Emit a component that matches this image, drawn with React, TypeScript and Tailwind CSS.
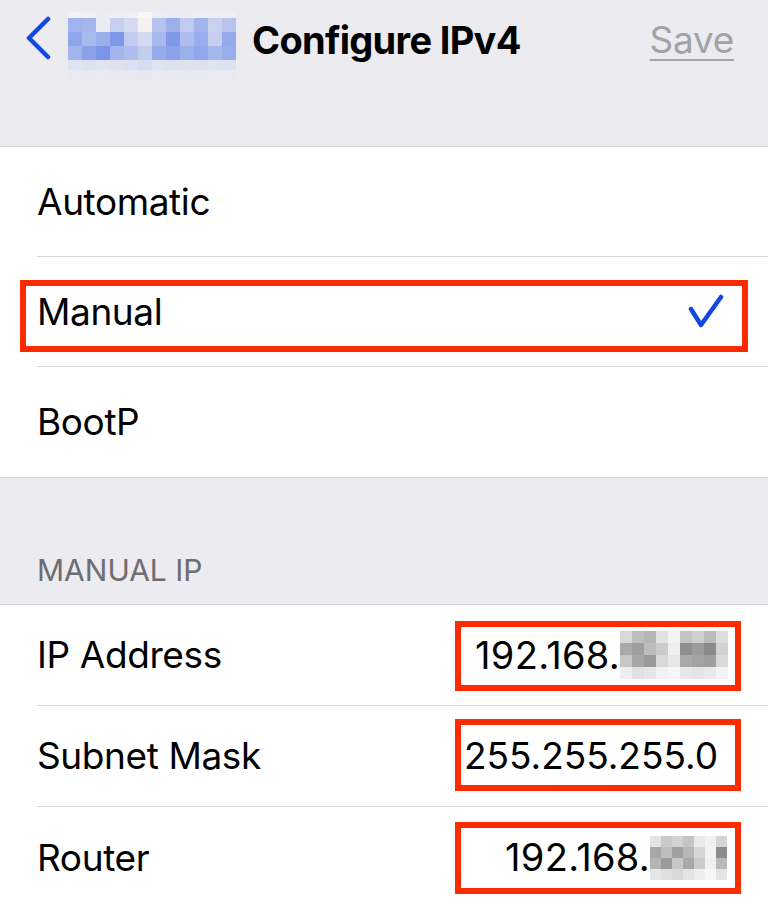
import React from "react";

const font = { fontFamily: "Inter, 'Noto Sans', sans-serif" };

// pixelated blur of the back-button label
const labelBlocks = [
  ["#f1f1f4", "#eef0f6", "#ecedf3", "#eeeff4", "#f0f0f3", "#f8f7f2", "#eceef5", "#eaecf5", "#ebedf4", "#eceef5", "#edeef4", "#eeeff4"],
  ["#9fb3ee", "#a5b6ea", "#eaecf4", "#c8d0ef", "#d4daf0", "#f4f2ee", "#b6c3ee", "#9cb0ec", "#c0cbef", "#a2b4ec", "#c9d1ef", "#b8c4ee"],
  ["#8fa6ec", "#a9baec", "#9bafeb", "#7f99e9", "#c1ccef", "#d2d9f0", "#a8b8ec", "#7f99e8", "#aebdee", "#98adeb", "#c5ceef", "#94aaeb"],
  ["#a3b5ec", "#8aa2ea", "#7a95e8", "#a3b5ec", "#aebdee", "#c2cdee", "#96abeb", "#8aa2ea", "#9cb0ec", "#90a7eb", "#a5b7ec", "#98adeb"],
  ["#dfe3f2", "#dde1f2", "#e1e4f2", "#dee2f2", "#dce1f2", "#d7ddf1", "#e0e3f2", "#dde1f2", "#dee2f2", "#dde1f2", "#e0e4f2", "#dfe2f2"],
  ["#e9e9ef", "#e8e9ef", "#e9e9ef", "#e8e9ef", "#e8e9ef", "#e7e8ef", "#e9e9ef", "#e8e9ef", "#e8e9ef", "#e8e9ef", "#e9e9ef", "#e9e9ef"],
];
const labelRowHeights = [6, 14, 14, 14, 10, 10];

const ipBlur1 = [
  ["#d8d8d8", "#bdbdbd", "#b5b5b5", "#e2e2e2", "#f3f3f3", "#c4c4c4", "#cfcfcf", "#bbbbbb", "#dddddd"],
  ["#a9a9a9", "#9e9e9e", "#bcbcbc", "#cbcbcb", "#eeeeee", "#8f8f8f", "#9c9c9c", "#8a8a8a", "#d2d2d2"],
  ["#c6c6c6", "#a6a6a6", "#999999", "#d8d8d8", "#e7e7e7", "#a8a8a8", "#a2a2a2", "#9e9e9e", "#dadada"],
  ["#eeeeee", "#e0e0e0", "#e6e6e6", "#f2f2f2", "#f7f7f7", "#e8e8e8", "#e4e4e4", "#e9e9e9", "#f3f3f3"],
];

const ipBlur2 = [
  ["#e3e3e3", "#c9c9c9", "#d2d2d2", "#c5c5c5", "#eaeaea", "#f1f1f1", "#d5d5d5"],
  ["#a7a7a7", "#bdbdbd", "#a0a0a0", "#b8b8b8", "#d6d6d6", "#f3f3f3", "#8d8d8d"],
  ["#b4b4b4", "#9b9b9b", "#c8c8c8", "#a9a9a9", "#cccccc", "#f0f0f0", "#b9b9b9"],
  ["#e6e6e6", "#dedede", "#d9d9d9", "#e4e4e4", "#eeeeee", "#f6f6f6", "#e4e4e4"],
];

function Pixels({ rows, size, heights }: { rows: string[][]; size: number; heights?: number[] }) {
  return (
    <div className="flex flex-col">
      {rows.map((r, i) => (
        <div key={i} className="flex">
          {r.map((c, j) => (
            <div key={j} style={{ width: size, height: heights ? heights[i] : size, background: c }} />
          ))}
        </div>
      ))}
    </div>
  );
}

function RedBox({ className }: { className: string }) {
  return <div className={"absolute border-[6px] border-[#ff2a00] pointer-events-none " + className} />;
}

function OptionRow({ label, checked, last }: { label: string; checked?: boolean; last?: boolean }) {
  return (
    <div className="relative h-[110px] pl-[37px]">
      <div className={"flex h-full items-center pr-[44px] " + (last ? "" : "border-b border-[#d8d8dc]")}>
        <span className="flex-1 text-[37px] tracking-[-0.4px] text-black">{label}</span>
        {checked && (
          <svg width="36" height="36" viewBox="0 0 36 36" fill="none">
            <path d="M3 15 L13 31 L33 3" stroke="#1348e0" strokeWidth="4.5" strokeLinecap="round" strokeLinejoin="round" />
          </svg>
        )}
      </div>
      {checked && <RedBox className="left-[20px] right-[20px] top-[23px] h-[72px]" />}
    </div>
  );
}

export default function App() {
  return (
    <div className="h-[907px] w-full overflow-hidden bg-[#ebebf0]" style={font}>
      {/* nav bar */}
      <div className="h-[147px] border-b border-[#d3d3d8]">
        <div className="flex items-start pt-[16px] pl-[25px] pr-[34px]">
          <svg width="26" height="44" viewBox="0 0 26 44" fill="none">
            <path d="M23 3 L4 22 L23 41" stroke="#1348e0" strokeWidth="4.5" strokeLinecap="round" strokeLinejoin="round" />
          </svg>
          <div className="ml-[17px] -mt-[4px]">
            <Pixels rows={labelBlocks} size={14} heights={labelRowHeights} />
          </div>
          <span className="ml-[16px] text-[38px] font-bold tracking-[-0.7px] leading-[48px] text-black">Configure IPv4</span>
          <span className="ml-auto text-[37px] leading-[48px] tracking-[-0.3px] text-[#a3a3a6] underline decoration-[2px] underline-offset-[6px]">
            Save
          </span>
        </div>
      </div>

      {/* mode options */}
      <div className="bg-white border-b border-[#d3d3d8]">
        <OptionRow label="Automatic" />
        <OptionRow label="Manual" checked />
        <OptionRow label="BootP" last />
      </div>

      {/* section header */}
      <div className="flex h-[127px] items-end pb-[11px] pl-[37px] border-b border-[#d3d3d8]">
        <span className="text-[30px] tracking-[0px] text-[#6d6d72]">MANUAL IP</span>
      </div>

      {/* manual ip fields */}
      <div className="bg-white">
        <div className="relative h-[101px] pl-[37px]">
          <div className="flex h-full items-center border-b border-[#d8d8dc] pr-[40px]">
            <span className="flex-1 text-[37px] tracking-[-0.4px] text-black">IP Address</span>
            <span className="text-[38px] tracking-[0.3px] text-black">192.168.</span>
            <Pixels rows={ipBlur1} size={12} />
          </div>
          <RedBox className="left-[455px] right-[27px] top-[16px] h-[70px]" />
        </div>
        <div className="relative h-[101px] pl-[37px]">
          <div className="flex h-full items-center border-b border-[#d8d8dc] pr-[50px]">
            <span className="flex-1 text-[37px] tracking-[-0.4px] text-black">Subnet Mask</span>
            <span className="text-[37px] tracking-[0px] text-black">255.255.255.0</span>
          </div>
          <RedBox className="left-[455px] right-[27px] top-[13px] h-[72px]" />
        </div>
        <div className="relative h-[101px] pl-[37px]">
          <div className="flex h-full items-center pr-[41px]">
            <span className="flex-1 text-[37px] tracking-[-0.4px] text-black">Router</span>
            <span className="text-[38px] tracking-[0.3px] text-black">192.168.</span>
            <Pixels rows={ipBlur2} size={11} />
          </div>
          <RedBox className="left-[455px] right-[27px] top-[15px] h-[72px]" />
        </div>
      </div>
    </div>
  );
}
